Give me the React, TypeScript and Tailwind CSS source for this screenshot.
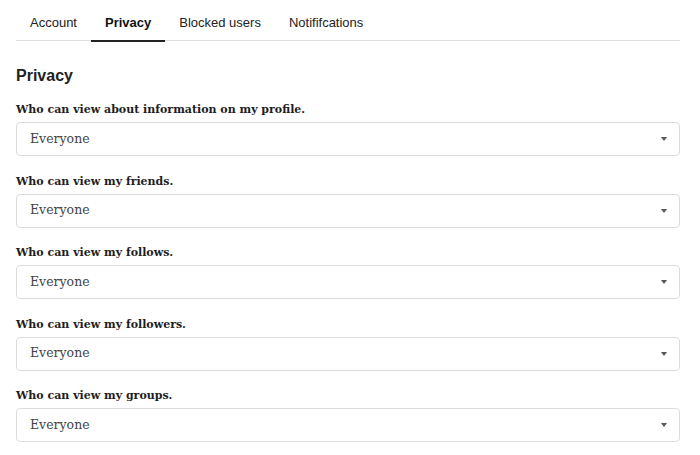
const tabs = ['Account', 'Privacy', 'Blocked users', 'Notififcations'];

const fields = [
  'Who can view about information on my profile.',
  'Who can view my friends.',
  'Who can view my follows.',
  'Who can view my followers.',
  'Who can view my groups.',
];

function PrivacySelect({ label }: { label: string }) {
  return (
    <div className="mb-[17.5px]">
      <label
        className="block mb-[4px] text-[11px] font-bold leading-[16px] text-[#1e1e1e]"
        style={{ fontFamily: '"DejaVu Serif", serif' }}
      >
        {label}
      </label>
      <div className="flex h-[34px] items-center rounded-[4px] border border-[#dcdcdc] bg-white pl-[13px] pr-[12px]">
        <span
          className="flex-1 text-[12.5px] text-[#444]"
          style={{ fontFamily: '"DejaVu Serif", serif' }}
        >
          Everyone
        </span>
        <span className="h-0 w-0 border-x-[3.5px] border-t-[4px] border-x-transparent border-t-[#555]" />
      </div>
    </div>
  );
}

export default function App() {
  return (
    <div className="min-h-[455px] bg-white pl-4 pr-5" style={{ fontFamily: '"Liberation Sans", Arial, sans-serif' }}>
      <nav className="flex border-b border-[#dedede]">
        {tabs.map((tab) => (
          <div
            key={tab}
            className={`-mb-[2px] border-b-2 px-[14px] pt-[15px] pb-[9px] text-[13px] leading-[16px] ${
              tab === 'Privacy' ? 'border-[#222] font-bold text-[#111]' : 'border-transparent text-[#222]'
            }`}
          >
            {tab}
          </div>
        ))}
      </nav>
      <h2 className="mt-[25px] mb-[16px] text-[16px] font-bold leading-[20px] text-[#222]">Privacy</h2>
      {fields.map((f) => (
        <PrivacySelect key={f} label={f} />
      ))}
    </div>
  );
}
